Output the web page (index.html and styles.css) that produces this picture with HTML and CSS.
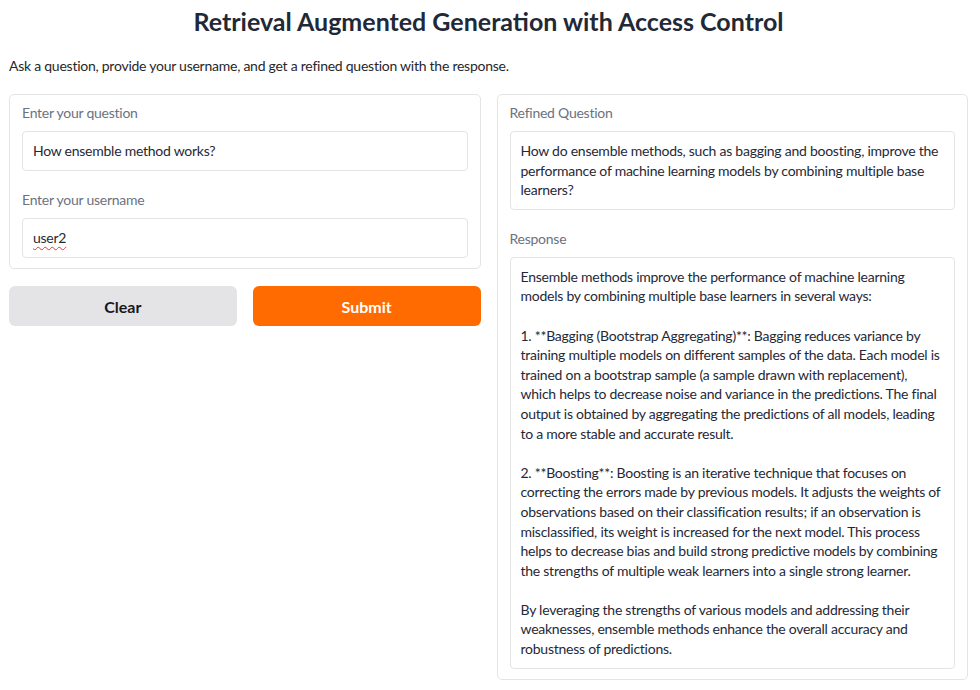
FILE: index.html
```html
<!DOCTYPE html>
<html lang="en">
<head>
<meta charset="utf-8">
<title>Retrieval Augmented Generation with Access Control</title>
<link rel="stylesheet" href="styles.css">
</head>
<body>
<div class="app">
  <h1 class="title">Retrieval Augmented Generation with Access Control</h1>
  <p class="desc">Ask a question, provide your username, and get a refined question with the response.</p>
  <div class="row">
    <div class="col">
      <div class="panel">
        <div class="field">
          <span class="label">Enter your question</span>
          <div class="input">How ensemble method works?</div>
        </div>
        <div class="field">
          <span class="label">Enter your username</span>
          <div class="input"><span class="typo">user2</span></div>
        </div>
      </div>
      <div class="buttons">
        <button class="btn secondary">Clear</button>
        <button class="btn primary">Submit</button>
      </div>
    </div>
    <div class="col">
      <div class="panel">
        <div class="field">
          <span class="label">Refined Question</span>
          <div class="area">How do ensemble methods, such as bagging and boosting, improve the<br>performance of machine learning models by combining multiple base<br>learners?</div>
        </div>
        <div class="field">
          <span class="label">Response</span>
          <div class="area">
            <p>Ensemble methods improve the performance of machine learning<br>models by combining multiple base learners in several ways:</p>
            <p>1. **Bagging (Bootstrap Aggregating)**: Bagging reduces variance by<br>training multiple models on different samples of the data. Each model is<br>trained on a bootstrap sample (a sample drawn with replacement),<br>which helps to decrease noise and variance in the predictions. The final<br>output is obtained by aggregating the predictions of all models, leading<br>to a more stable and accurate result.</p>
            <p>2. **Boosting**: Boosting is an iterative technique that focuses on<br>correcting the errors made by previous models. It adjusts the weights of<br>observations based on their classification results; if an observation is<br>misclassified, its weight is increased for the next model. This process<br>helps to decrease bias and build strong predictive models by combining<br>the strengths of multiple weak learners into a single strong learner.</p>
            <p>By leveraging the strengths of various models and addressing their<br>weaknesses, ensemble methods enhance the overall accuracy and<br>robustness of predictions.</p>
          </div>
        </div>
      </div>
    </div>
  </div>
</div>
</body>
</html>
```

FILE: styles.css
```css
* { box-sizing: border-box; }
html, body { margin: 0; padding: 0; background: #ffffff; }
body {
  font-family: "Lato", "Noto Sans", sans-serif;
  color: #27272a;
  font-size: 14px;
  letter-spacing: -0.25px;
}
.app {
  padding: 0 12px 0 9px;
}
.title {
  margin: 6px 0 0;
  font-size: 25px;
  line-height: 31px;
  font-weight: 700;
  text-align: center;
  color: #1f2937;
  letter-spacing: 0;
}
.desc {
  margin: 19px 0 18px;
  font-size: 14px;
  line-height: 20px;
}
.row {
  display: grid;
  grid-template-columns: minmax(0, 1fr) minmax(0, 1fr);
  gap: 16px;
  align-items: start;
}
.col {
  display: flex;
  flex-direction: column;
  gap: 17px;
  min-width: 0;
}
.panel {
  border: 1px solid #e4e4e7;
  border-radius: 5px;
  padding: 8px 12px 10px;
  display: flex;
  flex-direction: column;
  gap: 19px;
  background: #fff;
}
.field {
  display: flex;
  flex-direction: column;
}
.label {
  font-size: 14px;
  line-height: 20px;
  color: #6b7280;
  margin-bottom: 8px;
}
.input {
  height: 40px;
  border: 1px solid #e4e4e7;
  border-radius: 4px;
  padding: 0 10px 2px;
  display: flex;
  align-items: center;
  font-size: 14px;
  color: #1f2937;
}
.typo {
  text-decoration: underline wavy #e53935;
  text-decoration-thickness: 1px;
  text-underline-offset: 3px;
}
.area {
  border: 1px solid #e4e4e7;
  border-radius: 4px;
  padding: 9px 10px;
  font-size: 14px;
  line-height: 19.6px;
  color: #1f2937;
  white-space: nowrap;
  overflow: hidden;
}
.area p {
  margin: 0 0 19.6px;
}
.area p:last-child {
  margin-bottom: 0;
}
.buttons {
  display: grid;
  grid-template-columns: 1fr 1fr;
  gap: 16px;
}
.btn {
  height: 40px;
  border: none;
  border-radius: 6px;
  font-family: inherit;
  font-size: 16px;
  font-weight: 700;
  letter-spacing: 0;
  cursor: pointer;
}
.btn.secondary {
  background: #e4e4e7;
  color: #18181b;
}
.btn.primary {
  background: #ff6b00;
  color: #ffffff;
}
```
